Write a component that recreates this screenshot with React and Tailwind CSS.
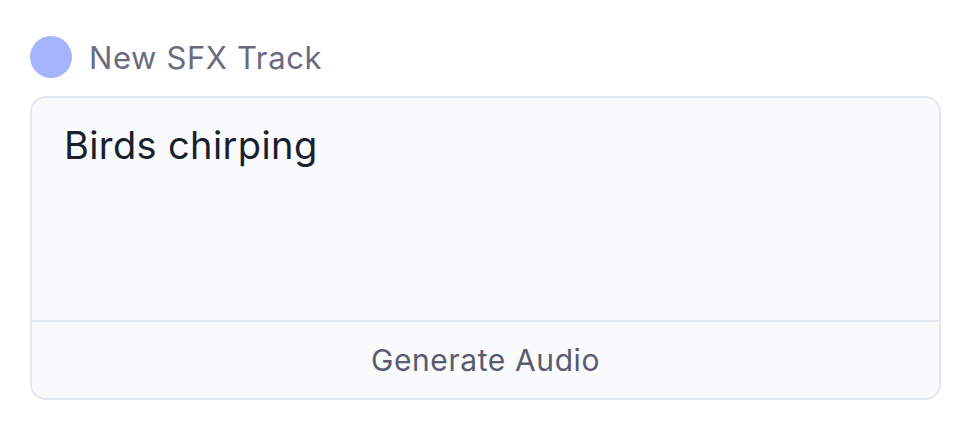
export default function App() {
  return (
    <div className="w-[973px] h-[431px] bg-white pl-[30px] pr-[32px] pt-[36px]" style={{ fontFamily: "Inter, 'Noto Sans', sans-serif" }}>
      <div className="flex items-center gap-[17px] h-[42px]">
        <div className="w-[42px] h-[42px] rounded-full bg-[#a5b4fc]" />
        <span className="text-[31px] leading-none tracking-[0.02em] text-[#6b6b80]">New SFX Track</span>
      </div>
      <div className="mt-[18px] border-2 border-[#e2e8f0] rounded-[16px] overflow-hidden bg-[#f8fafc]">
        <div className="h-[224px] px-[32px] pt-[25px] border-b-2 border-[#e2e8f0]">
          <span className="text-[38px] leading-[44px] tracking-[0.01em] text-[#1a1f2e]">Birds chirping</span>
        </div>
        <div className="h-[76px] flex items-center justify-center bg-[#f9fafb]">
          <span className="text-[30px] leading-none tracking-[0.02em] text-[#5a5a70]">Generate Audio</span>
        </div>
      </div>
    </div>
  );
}
